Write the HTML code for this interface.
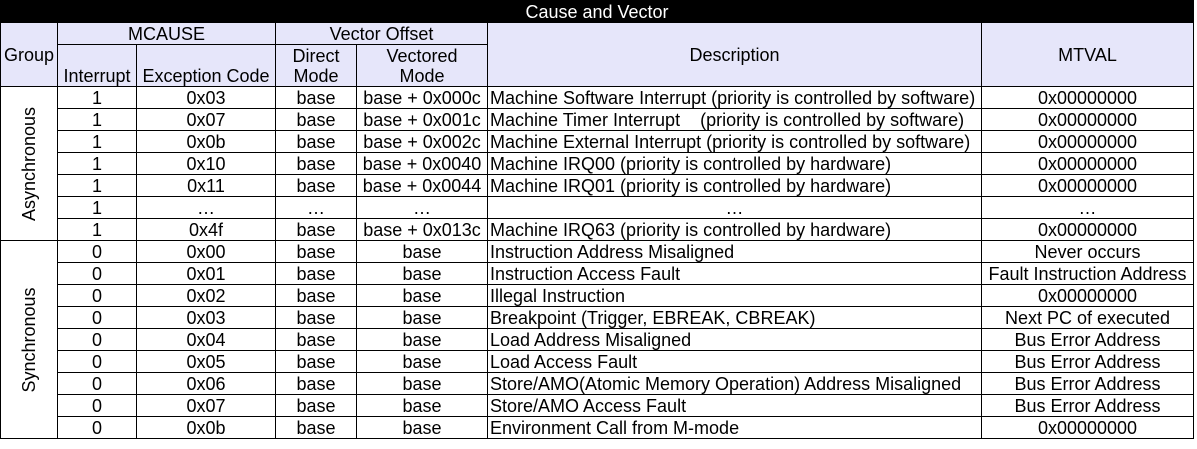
<!DOCTYPE html>
<html><head><meta charset="utf-8"><style>
body{margin:0;background:#fff;width:1197px;height:449px;overflow:hidden}
table{border-collapse:collapse;table-layout:fixed;font-family:"Liberation Sans",sans-serif;font-size:18px;color:#000;position:absolute;left:0;top:0;width:1193px}
td{border:1px solid #000;padding:0 2px;text-align:center;white-space:nowrap;height:21px;line-height:20px;overflow:hidden}
.t{background:#000;color:#fff;border-color:#000}
.h{background:#e6e6fa}
.d{text-align:left}
.v{position:relative;padding:0}
.v span{position:absolute;left:50%;top:50%;transform:translate(-50%,-50%) rotate(-90deg)}
</style></head><body>
<table>
<colgroup><col style="width:57px"><col style="width:79px"><col style="width:139px"><col style="width:81px"><col style="width:131px"><col style="width:494px"><col style="width:212px"></colgroup>
<tr><td class="t" colspan="7">Cause and Vector</td></tr>
<tr><td class="h" rowspan="2">Group</td><td class="h" colspan="2">MCAUSE</td><td class="h" colspan="2">Vector Offset</td><td class="h" rowspan="2">Description</td><td class="h" rowspan="2">MTVAL</td></tr>
<tr style="height:42px"><td class="h" style="vertical-align:bottom;height:41px;padding:0">Interrupt</td><td class="h" style="vertical-align:bottom">Exception Code</td><td class="h">Direct<br>Mode</td><td class="h">Vectored<br>Mode</td></tr>
<tr><td class="v" rowspan="7"><span>Asynchronous</span></td><td>1</td><td>0x03</td><td>base</td><td>base + 0x000c</td><td class="d">Machine Software Interrupt (priority is controlled by software)</td><td>0x00000000</td></tr>
<tr><td>1</td><td>0x07</td><td>base</td><td>base + 0x001c</td><td class="d">Machine Timer Interrupt &nbsp;&nbsp;&nbsp;(priority is controlled by software)</td><td>0x00000000</td></tr>
<tr><td>1</td><td>0x0b</td><td>base</td><td>base + 0x002c</td><td class="d">Machine External Interrupt (priority is controlled by software)</td><td>0x00000000</td></tr>
<tr><td>1</td><td>0x10</td><td>base</td><td>base + 0x0040</td><td class="d">Machine IRQ00 (priority is controlled by hardware)</td><td>0x00000000</td></tr>
<tr><td>1</td><td>0x11</td><td>base</td><td>base + 0x0044</td><td class="d">Machine IRQ01 (priority is controlled by hardware)</td><td>0x00000000</td></tr>
<tr><td>1</td><td>…</td><td>…</td><td>…</td><td>…</td><td>…</td></tr>
<tr><td>1</td><td>0x4f</td><td>base</td><td>base + 0x013c</td><td class="d">Machine IRQ63 (priority is controlled by hardware)</td><td>0x00000000</td></tr>
<tr><td class="v" rowspan="9"><span>Synchronous</span></td><td>0</td><td>0x00</td><td>base</td><td>base</td><td class="d">Instruction Address Misaligned</td><td>Never occurs</td></tr>
<tr><td>0</td><td>0x01</td><td>base</td><td>base</td><td class="d">Instruction Access Fault</td><td style="padding:0">Fault Instruction Address</td></tr>
<tr><td>0</td><td>0x02</td><td>base</td><td>base</td><td class="d">Illegal Instruction</td><td>0x00000000</td></tr>
<tr><td>0</td><td>0x03</td><td>base</td><td>base</td><td class="d">Breakpoint (Trigger, EBREAK, CBREAK)</td><td>Next PC of executed</td></tr>
<tr><td>0</td><td>0x04</td><td>base</td><td>base</td><td class="d">Load Address Misaligned</td><td>Bus Error Address</td></tr>
<tr><td>0</td><td>0x05</td><td>base</td><td>base</td><td class="d">Load Access Fault</td><td>Bus Error Address</td></tr>
<tr><td>0</td><td>0x06</td><td>base</td><td>base</td><td class="d">Store/AMO(Atomic Memory Operation) Address Misaligned</td><td>Bus Error Address</td></tr>
<tr><td>0</td><td>0x07</td><td>base</td><td>base</td><td class="d">Store/AMO Access Fault</td><td>Bus Error Address</td></tr>
<tr><td>0</td><td>0x0b</td><td>base</td><td>base</td><td class="d">Environment Call from M-mode</td><td>0x00000000</td></tr>
</table>
</body></html>
